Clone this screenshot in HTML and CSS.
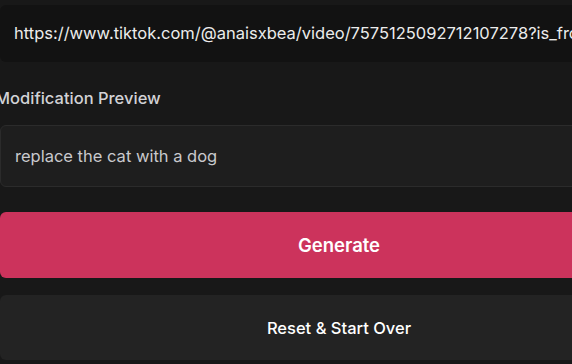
FILE: index.html
```html
<!DOCTYPE html>
<html lang="en">
<head>
    <meta charset="UTF-8">
    <title>Modify video</title>
    <link rel="stylesheet" href="styles.css">
</head>
<body>

    <div class="panel">
        <div class="url-box">https://www.tiktok.com/@anaisxbea/video/7575125092712107278?is_from_webapp=1&amp;sender_device=pc</div>

        <label class="field-label">Modification Preview</label>
        <div class="prompt-box">replace the cat with a dog</div>

        <button class="btn btn-primary">Generate</button>
        <button class="btn btn-secondary">Reset &amp; Start Over</button>
    </div>

</body>
</html>
```

FILE: styles.css
```css
*{
    margin: 0;
    padding: 0;
    box-sizing: border-box;
}
body{
    background-color: #181818;
    font-family: Inter, "Noto Sans", sans-serif;
    overflow: hidden;
}
.panel{
    display: flex;
    flex-direction: column;
    width: 678px;
    padding-top: 5px;
}
.url-box{
    height: 57px;
    line-height: 57px;
    padding: 0 14px;
    background-color: #121212;
    border-radius: 6px;
    color: #ececec;
    font-size: 16.5px;
    white-space: nowrap;
    overflow: hidden;
}
.field-label{
    margin: 26px 0 0 -5px;
    height: 20px;
    line-height: 20px;
    font-size: 16.5px;
    font-weight: 500;
    color: #d2d2d6;
}
.prompt-box{
    margin-top: 17px;
    height: 62px;
    line-height: 60px;
    padding: 0 14px;
    background-color: #1e1e1e;
    border: 1px solid #2b2b2b;
    border-radius: 6px;
    color: #c9c9cd;
    font-size: 16.5px;
}
.btn{
    display: block;
    width: 100%;
    border: none;
    border-radius: 6px;
    color: #fff;
    font-family: inherit;
    text-align: center;
    cursor: pointer;
}
.btn-primary{
    margin-top: 25px;
    height: 66px;
    background-color: #cc335c;
    font-size: 18.5px;
    font-weight: 600;
}
.btn-secondary{
    margin-top: 17px;
    height: 65px;
    background-color: #232323;
    font-size: 16.5px;
    font-weight: 500;
}
```
